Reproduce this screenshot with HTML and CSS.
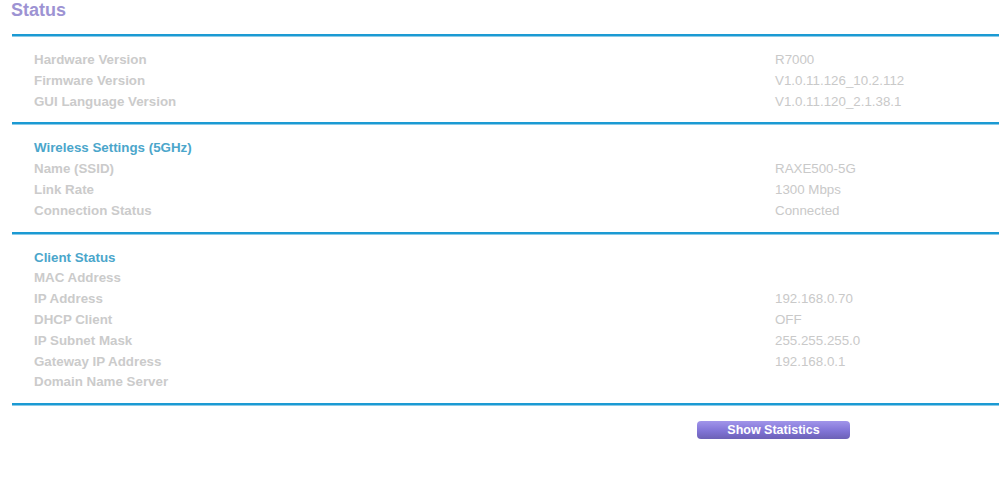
FILE: index.html
```html
<!DOCTYPE html>
<html>
<head>
<meta charset="utf-8">
<link rel="stylesheet" href="styles.css">
</head>
<body>
<div class="page">
  <h1 class="title">Status</h1>
  <section class="sec">
    <div class="row"><span class="lbl">Hardware Version</span><span class="val">R7000</span></div>
    <div class="row"><span class="lbl">Firmware Version</span><span class="val">V1.0.11.126_10.2.112</span></div>
    <div class="row"><span class="lbl">GUI Language Version</span><span class="val">V1.0.11.120_2.1.38.1</span></div>
  </section>
  <section class="sec">
    <div class="row"><span class="head">Wireless Settings (5GHz)</span></div>
    <div class="row"><span class="lbl">Name (SSID)</span><span class="val">RAXE500-5G</span></div>
    <div class="row"><span class="lbl">Link Rate</span><span class="val">1300 Mbps</span></div>
    <div class="row"><span class="lbl">Connection Status</span><span class="val">Connected</span></div>
  </section>
  <section class="sec">
    <div class="row"><span class="head">Client Status</span></div>
    <div class="row"><span class="lbl">MAC Address</span><span class="val"></span></div>
    <div class="row"><span class="lbl">IP Address</span><span class="val">192.168.0.70</span></div>
    <div class="row"><span class="lbl">DHCP Client</span><span class="val">OFF</span></div>
    <div class="row"><span class="lbl">IP Subnet Mask</span><span class="val">255.255.255.0</span></div>
    <div class="row"><span class="lbl">Gateway IP Address</span><span class="val">192.168.0.1</span></div>
    <div class="row"><span class="lbl">Domain Name Server</span><span class="val"></span></div>
  </section>
  <div class="endline"></div>
  <div class="actions"><button class="btn">Show Statistics</button></div>
</div>
</body>
</html>
```
FILE: styles.css
```css
html, body {
  margin: 0;
  padding: 0;
  background: #ffffff;
}
body {
  font-family: "Liberation Sans", Arial, sans-serif;
}
.page {
  padding-left: 12px;
}
.title {
  margin: 0 0 0 -1px;
  height: 34px;
  font-size: 18px;
  line-height: 20px;
  font-weight: bold;
  color: #9d93d3;
}
.sec {
  border-top: 2px solid #1b9ad3;
  box-shadow: inset 0 1px 0 #8ccbe8;
  padding: 14px 0 10px 22px;
}
.endline {
  border-top: 2px solid #1b9ad3;
  height: 1px;
  background: #8ccbe8;
}
.row {
  display: grid;
  grid-template-columns: 741px 1fr;
  height: 20.8px;
  line-height: 20.8px;
  font-size: 13.33px;
}
.lbl {
  font-weight: bold;
  color: #cbcbcb;
}
.val {
  color: #c9c9c9;
}
.head {
  font-weight: bold;
  color: #4ba6cb;
}
.actions {
  padding: 15px 0 0 685px;
}
.btn {
  display: block;
  width: 153px;
  height: 18px;
  padding: 0;
  border: none;
  border-radius: 4px;
  background: linear-gradient(#a195ea, #8174d6 55%, #6c61b6);
  color: #ffffff;
  font-family: "Liberation Sans", Arial, sans-serif;
  font-weight: bold;
  font-size: 12.5px;
  line-height: 18px;
}
```
